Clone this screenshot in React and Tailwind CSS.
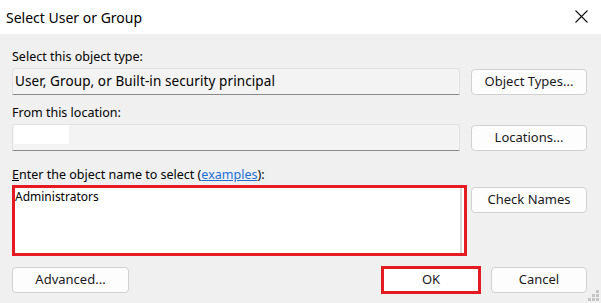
import React from 'react';

const FONT = { fontFamily: '"Segoe UI", "Noto Sans", "Liberation Sans", sans-serif' };

// Plain Win11-style push button
const Btn = ({ children, className = '' }) => (
    <div
        className={`flex items-center justify-center h-[26px] bg-[#fdfdfd] border border-[#d0d0d0] rounded-[4px] text-[13px] text-[#1a1a1a] ${className}`}
    >
        {children}
    </div>
);

const SizeGrip = () => (
    <svg className="absolute right-[1px] bottom-[1px]" width="12" height="12" viewBox="0 0 12 12">
        {[[8, 0], [4, 4], [8, 4], [0, 8], [4, 8], [8, 8]].map(([x, y]) => (
            <rect key={`${x}-${y}`} x={x} y={y} width="3" height="3" fill="#c4c4c4" />
        ))}
    </svg>
);

const App = () => {
    return (
        <div className="relative w-[601px] h-[303px] bg-[#f0f0f0] overflow-hidden" style={FONT}>
            {/* Title bar */}
            <div className="h-[34px] bg-white flex items-center justify-between pl-[6px] pr-[13px]">
                <span className="text-[14px] text-black">Select User or Group</span>
                <svg width="13" height="13" viewBox="0 0 13 13" className="mt-[-1px]">
                    <path d="M0.5 0.5 L12.5 12.5 M12.5 0.5 L0.5 12.5" stroke="#111" strokeWidth="1.1" />
                </svg>
            </div>

            {/* Body */}
            <div className="pl-[12px] pr-[14px] text-[12.5px] text-black">
                <div className="mt-[15px] h-[16px] leading-[16px]">Select this object type:</div>
                <div className="mt-[3px] flex items-start gap-[11px]">
                    <div className="w-[448px] h-[27px] bg-[#f3f3f3] border border-[#e2e2e2] border-b-[#8a8a8a] rounded-t-[3px] flex items-center pl-[2px] text-[13.5px] tracking-[0.1px]">
                        User, Group, or Built-in security principal
                    </div>
                    <Btn className="mt-[1px] w-[116px] h-[25px]">Object Types...</Btn>
                </div>

                <div className="mt-[10px] h-[16px] leading-[16px]">From this location:</div>
                <div className="mt-[3px] flex items-start gap-[11px]">
                    <div className="w-[448px] h-[27px] bg-[#f3f3f3] border border-[#e2e2e2] border-b-[#8a8a8a] rounded-t-[3px] pl-[1px]">
                        <div className="w-[55px] h-[19px] bg-white" />
                    </div>
                    <Btn className="mt-[1px] w-[116px] h-[25px]">Locations...</Btn>
                </div>

                <div className="mt-[16px] h-[16px] leading-[16px]">
                    <span className="underline">E</span>nter the object name to select (
                    <span className="text-[#1a6fd6] underline">examples</span>):
                </div>
                <div className="mt-[2px] flex items-start">
                    <div className="w-[455px] h-[71px] border-[3px] border-[#e41b23] bg-white flex">
                        <div className="flex-1 pt-[1px] leading-[16px] text-[12px]">Administrators</div>
                        <div className="w-[2px] bg-[#d8d8d8] mr-[2px]" />
                    </div>
                    <Btn className="ml-[4px] mt-[2px] w-[116px] h-[26px]">Check Names</Btn>
                </div>

                {/* Bottom buttons */}
                <div className="mt-[10px] flex items-center">
                    <Btn className="w-[117px]">Advanced...</Btn>
                    <div className="ml-[252px] w-[100px] h-[28px] border-[3px] border-[#e41b23] bg-white flex items-center justify-center text-[13px] text-[#1a1a1a]">
                        OK
                    </div>
                    <Btn className="ml-[10px] w-[96px]">Cancel</Btn>
                </div>
            </div>

            <SizeGrip />
        </div>
    );
};

export default App;
